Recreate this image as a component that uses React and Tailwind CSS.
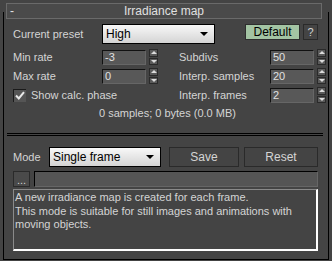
import React from 'react';

const Spinner = () => (
  <div className="flex flex-col w-[9px] h-[16px] gap-[1px]">
    <div className="flex-1 bg-[#5a5a5a] border border-[#2a2a2a] flex items-center justify-center">
      <div className="w-0 h-0 border-l-[3px] border-r-[3px] border-b-[3px] border-l-transparent border-r-transparent border-b-[#dcdcdc]" />
    </div>
    <div className="flex-1 bg-[#5a5a5a] border border-[#2a2a2a] flex items-center justify-center">
      <div className="w-0 h-0 border-l-[3px] border-r-[3px] border-t-[3px] border-l-transparent border-r-transparent border-t-[#dcdcdc]" />
    </div>
  </div>
);

const NumField = ({ value }) => (
  <div className="flex items-center gap-[3px]">
    <div className="w-[44px] h-[15px] bg-[#585858] border-t border-l border-[#111] border-b border-r border-b-[#666] border-r-[#666] pl-[2px] leading-[13px] text-[#e0e0e0]">
      {value}
    </div>
    <Spinner />
  </div>
);

const Dropdown = ({ value, width }) => (
  <div className={`${width} h-[20px] border border-black bg-gradient-to-b from-[#f8f8f8] to-[#d4d4d4] flex items-center justify-between pl-[3px] pr-[6px] text-black text-[12px]`}>
    <span>{value}</span>
    <div className="w-0 h-0 border-l-[4px] border-r-[4px] border-t-[4px] border-l-transparent border-r-transparent border-t-black" />
  </div>
);

export default function App() {
  return (
    <div
      className="w-[332px] h-[261px] bg-[#444444] text-[#d4d4d4] text-[11px] leading-[13px] pt-[3px] overflow-hidden"
      style={{ fontFamily: '"Liberation Sans", Arial, sans-serif' }}
    >
      {/* rollout title */}
      <div className="relative z-10 mx-[6px] mr-[10px] h-[16px] bg-[#4a4a4a] border border-[#6a6a6a] flex items-center text-[#e0e0e0] text-[12px]">
        <span className="pl-[3px] w-[20px]">-</span>
        <span className="flex-1 text-center pr-[20px]">Irradiance map</span>
      </div>

      {/* rollout frame */}
      <div className="mx-[3px] -mt-[7px] h-[248px] border-l border-r border-b border-black">
        <div className="pt-[12px] pl-[9px] pr-[10px]">
          {/* preset row */}
          <div className="flex items-center h-[20px]">
            <span className="w-[89px]">Current preset</span>
            <Dropdown value="High" width="w-[113px]" />
            <div className="ml-[30px] w-[55px] h-[16px] bg-[#a3c4a3] border border-[#2e2e2e] text-black text-[12px] flex items-center justify-center self-start">
              Default
            </div>
            <div className="ml-[3px] w-[15px] h-[16px] border border-[#2a2a2a] flex items-center justify-center self-start">
              ?
            </div>
          </div>

          {/* numeric rows */}
          <div className="grid grid-cols-[166px_1fr] mt-[5px] gap-y-[3px]">
            <div className="flex items-center h-[16px]">
              <span className="w-[89px]">Min rate</span>
              <NumField value="-3" />
            </div>
            <div className="flex items-center h-[16px]">
              <span className="w-[91px]">Subdivs</span>
              <NumField value="50" />
            </div>
            <div className="flex items-center h-[16px]">
              <span className="w-[89px]">Max rate</span>
              <NumField value="0" />
            </div>
            <div className="flex items-center h-[16px]">
              <span className="w-[91px]">Interp. samples</span>
              <NumField value="20" />
            </div>
            <div className="flex items-center h-[16px]">
              <div className="w-[13px] h-[13px] bg-[#555] border-t border-l border-[#1a1a1a] flex items-center justify-center mr-[5px]">
                <svg width="10" height="9" viewBox="0 0 10 9">
                  <path d="M1 4.5 L3.8 7.5 L9 1.2" stroke="#e8e8e8" strokeWidth="2" fill="none" />
                </svg>
              </div>
              <span>Show calc. phase</span>
            </div>
            <div className="flex items-center h-[16px]">
              <span className="w-[91px]">Interp. frames</span>
              <NumField value="2" />
            </div>
          </div>

          <div className="text-center mt-[4px] pl-[4px] h-[13px]">0 samples; 0 bytes (0.0 MB)</div>
        </div>

        {/* separator */}
        <div className="ml-[3px] mr-[5px] mt-[13px] h-[3px] border-t border-b border-black" />

        <div className="pl-[9px] pr-[10px] mt-[11px]">
          {/* mode row */}
          <div className="flex items-center h-[20px]">
            <span className="w-[36px]">Mode</span>
            <Dropdown value="Single frame" width="w-[112px]" />
            <div className="ml-[8px] w-[70px] h-[20px] border border-[#2a2a2a] flex items-center justify-center text-[12px]">
              Save
            </div>
            <div className="ml-[5px] w-[74px] h-[20px] border border-[#2a2a2a] flex items-center justify-center text-[12px]">
              Reset
            </div>
          </div>

          {/* file row */}
          <div className="flex items-center mt-[4px] h-[16px]">
            <div className="w-[17px] h-[16px] bg-[#4a4a4a] border border-[#2a2a2a] flex items-end justify-center leading-[12px]">
              ...
            </div>
            <div className="ml-[4px] flex-1 h-[16px] bg-[#555] border-t border-l border-black border-b border-r border-b-[#666] border-r-[#666]" />
          </div>

          {/* description */}
          <div className="mt-[2px] h-[62px] border-t border-l border-[#8a8a8a] border-b-2 border-r-2 border-b-white border-r-white pl-[1px] pt-[1px] leading-[13.5px] text-[#d4d4d4]">
            A new irradiance map is created for each frame.
            <br />
            This mode is suitable for still images and animations with
            <br />
            moving objects.
          </div>
        </div>
      </div>
    </div>
  );
}
